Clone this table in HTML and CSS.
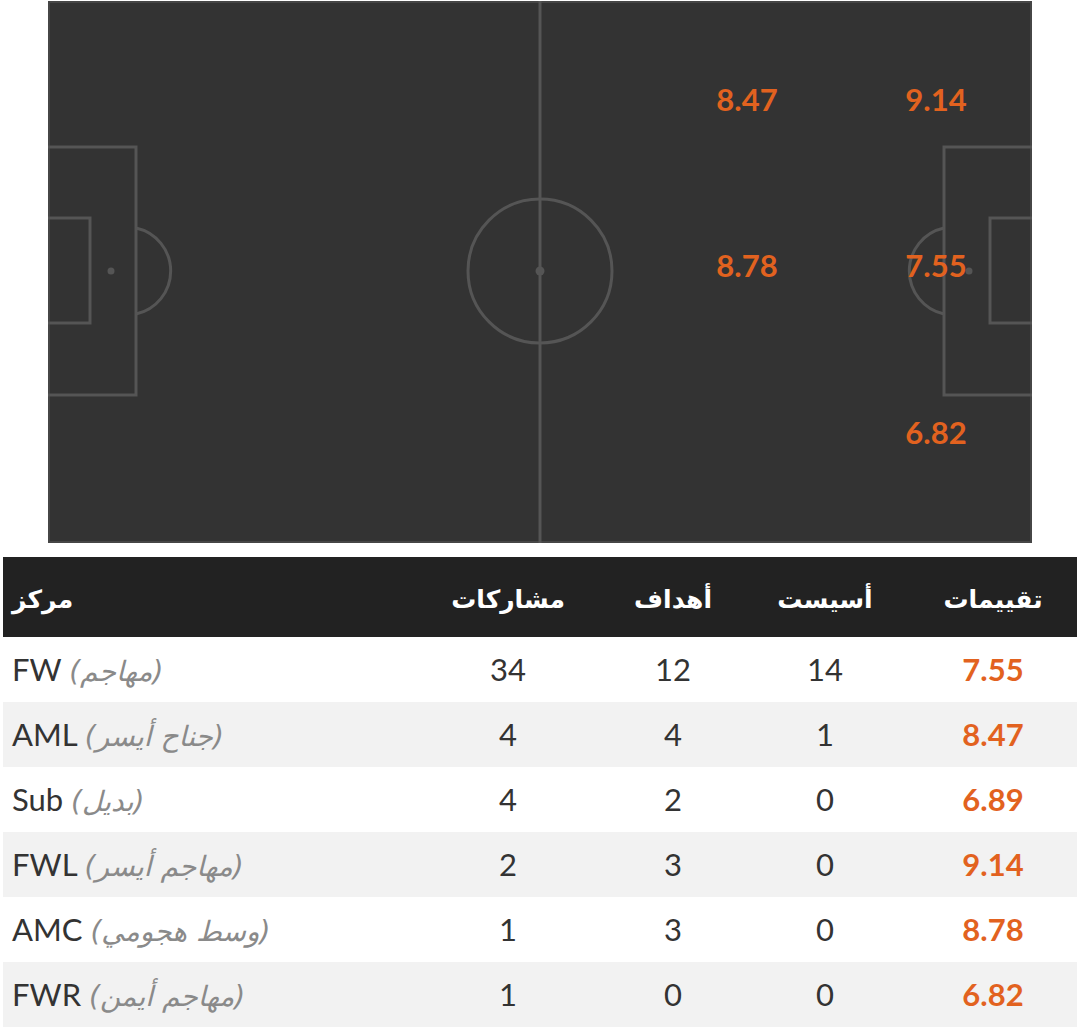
FILE: index.html
```html
<!DOCTYPE html>
<html lang="ar">
<head>
<meta charset="utf-8">
<title>Positions</title>
<link rel="stylesheet" href="styles.css">
</head>
<body>
<div class="pitch">
  <svg class="lines" width="984" height="542" viewBox="0 0 984 542">
    <rect x="1" y="1" width="982" height="540" fill="none" stroke="#464646" stroke-width="2"/>
    <g fill="none" stroke="#555555" stroke-width="3">
      <line x1="492" y1="0" x2="492" y2="542"/>
      <circle cx="492" cy="270" r="72"/>
      <path d="M0,146 H88 V394 H0"/>
      <path d="M0,217 H42 V322 H0"/>
      <path d="M88,227 A44 44 0 0 1 88,313"/>
      <path d="M984,146 H896 V394 H984"/>
      <path d="M984,217 H942 V322 H984"/>
      <path d="M896,227 A44 44 0 0 0 896,313"/>
    </g>
    <g fill="#555555">
      <circle cx="492" cy="270" r="4.5"/>
      <circle cx="63" cy="270" r="3.5"/>
      <circle cx="921" cy="270" r="3.5"/>
    </g>
  </svg>
  <span class="spot" style="left:699px;top:98px">8.47</span>
  <span class="spot" style="left:888px;top:98px">9.14</span>
  <span class="spot" style="left:699px;top:264px">8.78</span>
  <span class="spot" style="left:888px;top:264px">7.55</span>
  <span class="spot" style="left:888px;top:431px">6.82</span>
</div>

<div class="table">
  <div class="row head">
    <div class="cell pos">مركز</div>
    <div class="cell">مشاركات</div>
    <div class="cell">أهداف</div>
    <div class="cell">أسيست</div>
    <div class="cell">تقييمات</div>
  </div>
  <div class="row">
    <div class="cell pos">FW <span class="ar">(مهاجم)</span></div>
    <div class="cell">34</div>
    <div class="cell">12</div>
    <div class="cell">14</div>
    <div class="cell rating">7.55</div>
  </div>
  <div class="row alt">
    <div class="cell pos">AML <span class="ar">(جناح أيسر)</span></div>
    <div class="cell">4</div>
    <div class="cell">4</div>
    <div class="cell">1</div>
    <div class="cell rating">8.47</div>
  </div>
  <div class="row">
    <div class="cell pos">Sub <span class="ar">(بديل)</span></div>
    <div class="cell">4</div>
    <div class="cell">2</div>
    <div class="cell">0</div>
    <div class="cell rating">6.89</div>
  </div>
  <div class="row alt">
    <div class="cell pos">FWL <span class="ar">(مهاجم أيسر)</span></div>
    <div class="cell">2</div>
    <div class="cell">3</div>
    <div class="cell">0</div>
    <div class="cell rating">9.14</div>
  </div>
  <div class="row">
    <div class="cell pos">AMC <span class="ar">(وسط هجومي)</span></div>
    <div class="cell">1</div>
    <div class="cell">3</div>
    <div class="cell">0</div>
    <div class="cell rating">8.78</div>
  </div>
  <div class="row alt">
    <div class="cell pos">FWR <span class="ar">(مهاجم أيمن)</span></div>
    <div class="cell">1</div>
    <div class="cell">0</div>
    <div class="cell">0</div>
    <div class="cell rating">6.82</div>
  </div>
</div>
</body>
</html>
```

FILE: styles.css
```css
html, body {
  margin: 0;
  padding: 0;
  background: #ffffff;
}

body {
  font-family: Lato, "DejaVu Sans", sans-serif;
  color: #333333;
  direction: ltr;
}

.pitch {
  position: relative;
  width: 984px;
  height: 542px;
  margin: 1px 0 0 48px;
  background: #333333;
}

.lines {
  display: block;
}

.spot {
  position: absolute;
  transform: translate(-50%, -50%);
  font-family: Lato, sans-serif;
  font-weight: 700;
  font-size: 31px;
  line-height: 1;
  color: #e2621f;
}

.table {
  margin: 14px 3px 0 3px;
  width: 1074px;
}

.row {
  display: grid;
  grid-template-columns: 408px 194px 136px 168px 168px;
  height: 65px;
  align-items: center;
  background: #ffffff;
}

.row.alt {
  background: #f2f2f2;
}

.row.head {
  height: 80px;
  background: #222222;
  color: #ffffff;
}

.cell {
  text-align: center;
  font-size: 31px;
  line-height: 1;
  white-space: nowrap;
}

.head .cell {
  font-family: "DejaVu Sans", sans-serif;
  font-size: 25px;
  font-weight: 600;
  padding-top: 4px;
}

.cell.pos {
  text-align: left;
  padding-left: 9px;
}

.ar {
  font-family: "DejaVu Sans", sans-serif;
  font-style: italic;
  font-size: 28px;
  color: #8a8a8a;
}

.rating {
  font-weight: 700;
  color: #e2621f;
}
```
